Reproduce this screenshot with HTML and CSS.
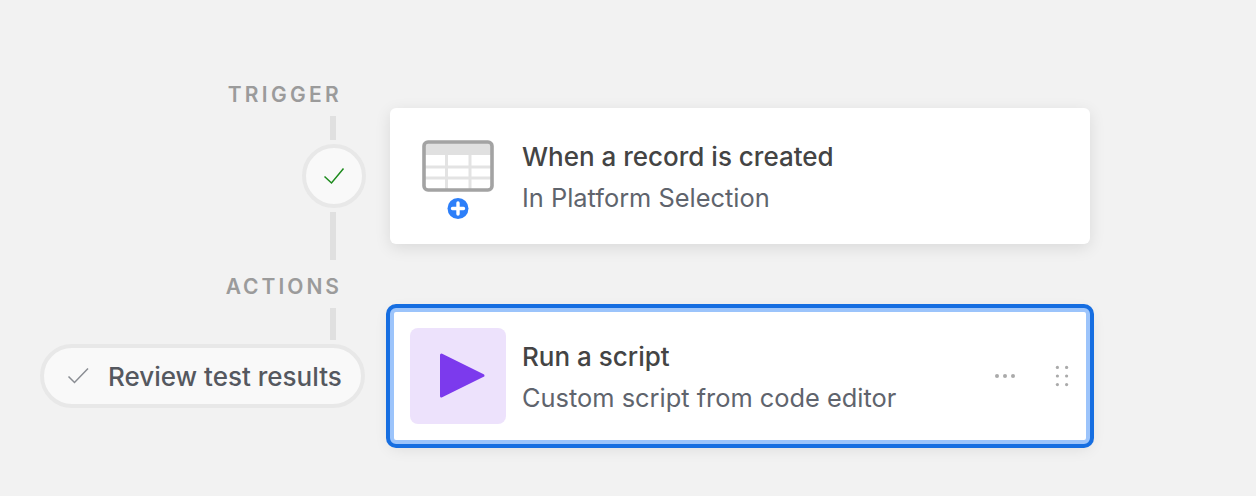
FILE: index.html
```html
<!DOCTYPE html>
<html lang="en">
  <head>
    <meta charset="UTF-8" />
    <meta name="viewport" content="width=device-width, initial-scale=1.0" />
    <title>Automation</title>
    <link rel="stylesheet" href="styles.css">
  </head>
  <body>
    <div class="flow">
      <!-- left rail -->
      <div class="rail">
        <div class="rail-label">TRIGGER</div>
        <div class="rail-line rail-line-a"></div>
        <div class="status-dot">
          <svg width="24" height="20" viewBox="0 0 24 20">
            <path d="M2.5 10.5L9.5 17L21.5 2.5" fill="none" stroke="#1c8a1c" stroke-width="1.5"></path>
          </svg>
        </div>
        <div class="rail-line rail-line-b"></div>
        <div class="rail-label rail-label-actions">ACTIONS</div>
        <div class="rail-line rail-line-c"></div>
        <div class="status-pill">
          <svg width="24" height="20" viewBox="0 0 24 20">
            <path d="M2.5 10.5L8.5 16.5L22 2.5" fill="none" stroke="#8a8d93" stroke-width="1.5"></path>
          </svg>
          <span>Review test results</span>
        </div>
      </div>

      <!-- step cards -->
      <div class="cards">
        <div class="card">
          <div class="card-icon">
            <svg width="96" height="96" viewBox="0 0 96 96">
              <rect x="14" y="14" width="68" height="48" rx="4" fill="#fff"></rect>
              <path d="M14 27V18a4 4 0 0 1 4-4h60a4 4 0 0 1 4 4v9z" fill="#e0e0e0"></path>
              <path d="M14 39h68M14 50h68M36.5 27v35M60 27v35" stroke="#e3e3e3" stroke-width="3" fill="none"></path>
              <rect x="14" y="14" width="68" height="48" rx="4" fill="none" stroke="#a3a3a3" stroke-width="3.6"></rect>
              <circle cx="48" cy="80.5" r="10.5" fill="#2d7ff9"></circle>
              <path d="M48 75v11M42.5 80.5h11" stroke="#fff" stroke-width="3.4" stroke-linecap="round"></path>
            </svg>
          </div>
          <div class="card-text">
            <div class="card-title">When a record is created</div>
            <div class="card-sub">In Platform Selection</div>
          </div>
        </div>

        <div class="card card-selected">
          <div class="card-icon card-icon-script">
            <svg width="96" height="96" viewBox="0 0 96 96">
              <path d="M31.5 27L73 47.5L31.5 68z" fill="#7c3aed" stroke="#7c3aed" stroke-width="3" stroke-linejoin="round"></path>
            </svg>
          </div>
          <div class="card-text">
            <div class="card-title">Run a script</div>
            <div class="card-sub">Custom script from code editor</div>
          </div>
          <div class="card-tools">
            <svg width="24" height="8" viewBox="0 0 24 8">
              <circle cx="4" cy="4" r="2" fill="#aaa"></circle>
              <circle cx="12" cy="4" r="2" fill="#aaa"></circle>
              <circle cx="20" cy="4" r="2" fill="#aaa"></circle>
            </svg>
            <svg width="16" height="24" viewBox="0 0 16 24">
              <circle cx="3.4" cy="3.4" r="1.6" fill="#aaa"></circle>
              <circle cx="12.6" cy="3.4" r="1.6" fill="#aaa"></circle>
              <circle cx="3.4" cy="12" r="1.6" fill="#aaa"></circle>
              <circle cx="12.6" cy="12" r="1.6" fill="#aaa"></circle>
              <circle cx="3.4" cy="20.6" r="1.6" fill="#aaa"></circle>
              <circle cx="12.6" cy="20.6" r="1.6" fill="#aaa"></circle>
            </svg>
          </div>
        </div>
      </div>
    </div>
  </body>
</html>
```

FILE: styles.css
```css
body {
  margin: 0;
  background-color: #f2f2f2;
  font-family: Inter, 'Liberation Sans', sans-serif;
}

.flow {
  display: flex;
  gap: 24px;
  padding: 83px 0 48px 40px;
}

/* left rail */
.rail {
  width: 326px;
  display: flex;
  flex-direction: column;
  align-items: flex-end;
}

.rail-label {
  height: 24px;
  line-height: 24px;
  margin-right: 24px;
  font-size: 21px;
  font-weight: 600;
  letter-spacing: 3.3px;
  color: #9b9b9b;
}

.rail-label-actions {
  margin-top: 15px;
  letter-spacing: 3px;
}

.rail-line {
  width: 6px;
  margin-right: 30px;
  background-color: #e0e0e0;
}

.rail-line-a {
  height: 24px;
  margin-top: 9px;
}

.rail-line-b {
  height: 48px;
}

.rail-line-c {
  height: 32px;
  margin-top: 9px;
}

.status-dot {
  box-sizing: border-box;
  width: 64px;
  height: 64px;
  margin: 4px 0;
  display: flex;
  justify-content: center;
  align-items: center;
  border: 4px solid #e8e8e8;
  border-radius: 50%;
  background-color: #f9f9f9;
}

.status-pill {
  box-sizing: border-box;
  width: 325px;
  height: 64px;
  margin: 4px 1px 0 0;
  padding-left: 22px;
  display: flex;
  align-items: center;
  gap: 18px;
  border: 4px solid #e8e8e8;
  border-radius: 32px;
  background-color: #f9f9f9;
  font-size: 26px;
  font-weight: 500;
  color: #55585f;
}

.status-pill span {
  margin-top: 1px;
}

/* cards */
.cards {
  width: 700px;
  padding-top: 25px;
  display: flex;
  flex-direction: column;
  gap: 64px;
}

.card {
  box-sizing: border-box;
  height: 136px;
  padding: 20px;
  display: flex;
  align-items: center;
  gap: 16px;
  border-radius: 6px;
  background-color: #fff;
  box-shadow: 0 4px 16px rgba(0, 0, 0, 0.1);
}

.card-selected {
  border: 4px solid #9cc4fb;
  padding: 16px;
  box-shadow: 0 0 0 4px #166ee1, 0 4px 16px rgba(0, 0, 0, 0.1);
}

.card-icon {
  width: 96px;
  height: 96px;
  flex-shrink: 0;
  border-radius: 8px;
}

.card-icon svg {
  display: block;
}

.card-icon-script {
  background-color: #ede2fc;
}

.card-text {
  flex: 1;
  padding-top: 3px;
}

.card-title {
  font-size: 26px;
  line-height: 32px;
  font-weight: 500;
  color: #444;
}

.card-sub {
  margin-top: 9px;
  font-size: 25.4px;
  line-height: 32px;
  color: #5f646d;
}

.card-tools {
  display: flex;
  align-items: center;
  gap: 37px;
}

.card-tools svg {
  display: block;
}
```
